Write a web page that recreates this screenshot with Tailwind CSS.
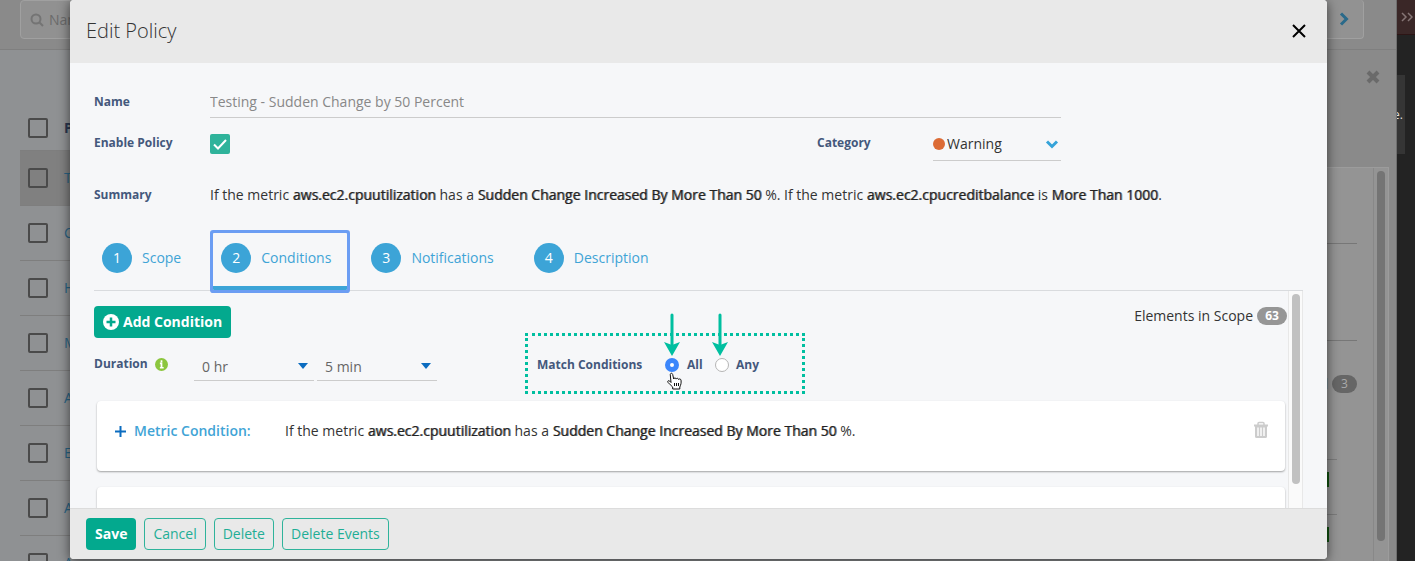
<!DOCTYPE html>
<html lang="en">
<head>
    <meta charset="utf-8"/>
    <meta name="viewport" content="width=device-width, initial-scale=1.0"/>
    <title>Edit Policy</title>
    <script src="https://cdn.jsdelivr.net/npm/@tailwindcss/browser@4"></script>
</head>
<body class="font-['Open_Sans',sans-serif] text-sm text-[#333]">
    <div class="relative h-screen overflow-hidden flex bg-[#232323]">

        <!-- Page behind the dialog -->
        <main class="flex-1 min-w-0 flex flex-col bg-[#8f9193] border-r border-[#6f6f6f]">
            <div class="h-[50px] shrink-0 flex justify-between items-start bg-[#8a8a8a] border-b border-[#7f7f7f] pl-5 pr-8">
                <label class="flex items-center gap-1 h-[39px] w-80 px-2 bg-[#919191] border border-[#a0a0a0] rounded-sm">
                    <svg class="w-4 h-4 text-[#747474] shrink-0" viewBox="0 0 16 16" fill="none" stroke="currentColor" stroke-width="2"><circle cx="7" cy="7" r="4.5"/><path d="M10.5 10.5L14 14"/></svg>
                    <input type="text" placeholder="Name" aria-label="Name" class="w-full outline-none placeholder:text-[#6b6b6b]"/>
                </label>
                <button aria-label="Next" class="h-[39px] w-10 bg-[#929292] border-r border-b border-[#a0a0a0] rounded-sm flex items-center justify-center">
                    <svg class="w-4 h-4 text-[#2a6a8a]" viewBox="0 0 16 16" fill="none" stroke="currentColor" stroke-width="3"><path d="M5 2.5l5.500 5.500L5 13.500"/></svg>
                </button>
            </div>
            <div class="flex-1 min-h-0 flex">
                <div class="flex-1 pl-5">
                    <table class="w-full mt-14 border-collapse">
                        <thead>
                            <tr class="h-[44px] border-b border-[#7e7e7e] text-left">
                                <th class="w-11 pl-2"><input type="checkbox" aria-label="Select all" class="block appearance-none w-5 h-5 border-2 border-[#4a4a4a] rounded-xs"/></th>
                                <th class="text-[#2b3750]">Policy</th>
                            </tr>
                        </thead>
                        <tbody class="text-[#2a6485]">
                            <tr class="h-[55px] border-b border-[#7e7e7e] bg-[#808080]"><td class="pl-2"><input type="checkbox" aria-label="T" class="block appearance-none w-5 h-5 border-2 border-[#4a4a4a] rounded-xs"/></td><td>T</td></tr>
                            <tr class="h-[55px] border-b border-[#7e7e7e]"><td class="pl-2"><input type="checkbox" aria-label="C" class="block appearance-none w-5 h-5 border-2 border-[#4a4a4a] rounded-xs"/></td><td>C</td></tr>
                            <tr class="h-[55px] border-b border-[#7e7e7e]"><td class="pl-2"><input type="checkbox" aria-label="H" class="block appearance-none w-5 h-5 border-2 border-[#4a4a4a] rounded-xs"/></td><td>H</td></tr>
                            <tr class="h-[55px] border-b border-[#7e7e7e]"><td class="pl-2"><input type="checkbox" aria-label="M" class="block appearance-none w-5 h-5 border-2 border-[#4a4a4a] rounded-xs"/></td><td>M</td></tr>
                            <tr class="h-[55px] border-b border-[#7e7e7e]"><td class="pl-2"><input type="checkbox" aria-label="A" class="block appearance-none w-5 h-5 border-2 border-[#4a4a4a] rounded-xs"/></td><td>A</td></tr>
                            <tr class="h-[55px] border-b border-[#7e7e7e]"><td class="pl-2"><input type="checkbox" aria-label="E" class="block appearance-none w-5 h-5 border-2 border-[#4a4a4a] rounded-xs"/></td><td>E</td></tr>
                            <tr class="h-[55px] border-b border-[#7e7e7e]"><td class="pl-2"><input type="checkbox" aria-label="A" class="block appearance-none w-5 h-5 border-2 border-[#4a4a4a] rounded-xs"/></td><td>A</td></tr>
                            <tr class="h-[55px]"><td class="pl-2"><input type="checkbox" aria-label="A" class="block appearance-none w-5 h-5 border-2 border-[#4a4a4a] rounded-xs"/></td><td>A</td></tr>
                        </tbody>
                    </table>
                </div>
                <aside class="w-[200px] flex flex-col bg-[#8a8a8a] pr-[7px]">
                    <div class="h-[117px] shrink-0 flex justify-end pt-[19px] pr-2">
                        <button aria-label="Close panel" class="w-4 h-4">
                            <svg class="w-4 h-4 text-[#6a6a6a]" viewBox="0 0 16 16" fill="none" stroke="currentColor" stroke-width="4"><path d="M3 3l10 10M13 3L3 13"/></svg>
                        </button>
                    </div>
                    <div class="flex-1 flex bg-[#949494] border-t border-r border-[#9c9c9c]">
                        <div class="flex-1 pr-4 flex flex-col">
                            <div class="h-[76px] shrink-0 border-b border-[#777]"></div>
                            <div class="h-[97px] shrink-0 border-b border-[#777]"></div>
                            <div class="h-[86px] shrink-0 flex items-center justify-end gap-1 text-[#222]">Total <span class="w-[25px] h-[18px] rounded-full bg-[#666] text-[#aaa] text-xs leading-[18px] text-center">3</span></div>
                            <div class="h-[33px] shrink-0 mr-5 border-b border-[#7c7c7c]"></div>
                            <div class="h-[55px] shrink-0 mr-5 pr-2 border-b border-[#7c7c7c] flex items-start justify-end pt-3"><span class="w-4 h-[15px] bg-[#10520f]"></span></div>
                            <div class="mr-5 pr-2 flex justify-end pt-3"><span class="w-4 h-[15px] bg-[#10520f]"></span></div>
                        </div>
                        <div class="w-[15px] border-l border-[#888] flex justify-center pt-[3px]"><div class="w-2 h-[370px] rounded-full bg-[#747474]"></div></div>
                    </div>
                </aside>
            </div>
        </main>
        <div class="w-[18px] flex flex-col overflow-hidden">
            <div class="h-[35px] flex items-center bg-[#3a2727] border-b border-[#2c1515] pl-1">
                <svg class="w-3 h-3 text-[#857575]" viewBox="0 0 12 12" fill="none" stroke="currentColor" stroke-width="1.500"><path d="M1 2l4 4-4 4M7 2l4 4-4 4"/></svg>
            </div>
            <div class="mt-10 w-2 h-[79px] bg-[#353535] flex items-center justify-end pr-[2px] text-xs text-[#ddd]"><span>e.</span></div>
        </div>

        <!-- Edit policy dialog -->
        <div role="dialog" aria-labelledby="dialogTitle" class="absolute top-0 bottom-[2px] left-[70px] right-[88px] flex flex-col rounded bg-[#f6f7f9] shadow-[0_2px_12px_rgba(0,0,0,0.6)] overflow-hidden">
            <header class="h-[63px] shrink-0 flex items-center justify-between bg-[#e9e9e9] pl-4 pr-5 pb-[2px]">
                <h1 id="dialogTitle" class="text-xl font-light">Edit Policy</h1>
                <button aria-label="Close" class="w-4 h-4">
                    <svg class="w-4 h-4 text-black" viewBox="0 0 16 16" fill="none" stroke="currentColor" stroke-width="2"><path d="M2 2l12 12M14 2L2 14"/></svg>
                </button>
            </header>

            <div class="flex-1 min-h-0 flex flex-col px-6 pt-[23px]">
                <div class="flex items-center pr-[242px]">
                    <label for="name" class="w-[116px] text-xs font-bold text-[#44587c]">Name</label>
                    <input id="name" type="text" value="Testing - Sudden Change by 50 Percent" class="flex-1 h-8 border-b border-[#ccc] text-[#888] outline-none"/>
                </div>
                <div class="flex items-start mt-[10px] pr-[242px]">
                    <label for="enable" class="w-[116px] pt-[7px] text-xs font-bold text-[#44587c]">Enable Policy</label>
                    <div class="grid pt-[6px]">
                        <input id="enable" type="checkbox" checked class="col-start-1 row-start-1 appearance-none w-5 h-5 rounded-xs bg-[#2fb39b]"/>
                        <svg class="col-start-1 row-start-1 w-5 h-5 text-white pointer-events-none" viewBox="0 0 20 20" fill="none" stroke="currentColor" stroke-width="2"><path d="M4 10.500l4 4L16 6"/></svg>
                    </div>
                    <label for="category" class="ml-auto w-[116px] pt-[7px] text-xs font-bold text-[#44587c]">Category</label>
                    <div class="w-32 h-[33px] flex items-center border-b border-[#ccc]">
                        <span class="w-3 h-3 rounded-full bg-[#dc6b35] shrink-0"></span>
                        <select id="category" class="flex-1 appearance-none outline-none pl-[2px]">
                            <option>Warning</option>
                        </select>
                        <svg class="w-4 h-4 mr-[1px] text-[#35a3d9] pointer-events-none" viewBox="0 0 16 16" fill="none" stroke="currentColor" stroke-width="3"><path d="M3 5.500l5 5 5-5"/></svg>
                    </div>
                </div>
                <div class="flex items-center mt-6">
                    <span class="w-[116px] text-xs font-bold text-[#44587c]">Summary</span>
                    <p class="text-[#333]">If the metric <span class="text-[#222] [text-shadow:1px_0_0_#2229]">aws.ec2.cpuutilization</span> has a <span class="text-[#222] [text-shadow:1px_0_0_#2229]">Sudden Change Increased By More Than 50</span> %. If the metric <span class="text-[#222] [text-shadow:1px_0_0_#2229]">aws.ec2.cpucreditbalance</span> is <span class="text-[#222] [text-shadow:1px_0_0_#2229]">More Than 1000</span>.</p>
                </div>

                <nav class="flex gap-4 h-[58px] shrink-0 mt-7 border-b border-[#d9dbde] text-[#3fa4d6]">
                    <button class="flex items-center gap-[10px] pl-2 pr-4 pb-2">
                        <span class="w-[30px] h-[30px] rounded-full bg-[#3ca4d7] text-white leading-[30px]">1</span>Scope
                    </button>
                    <button class="flex items-center gap-[10px] pl-2 pr-4 pb-1 border-b-4 border-[#3ca4d7] rounded-[1px] ring-3 ring-[#6b9df3]">
                        <span class="w-[30px] h-[30px] rounded-full bg-[#3ca4d7] text-white leading-[30px]">2</span>Conditions
                    </button>
                    <button class="flex items-center gap-[10px] pl-2 pr-4 pb-2">
                        <span class="w-[30px] h-[30px] rounded-full bg-[#3ca4d7] text-white leading-[30px]">3</span>Notifications
                    </button>
                    <button class="flex items-center gap-[10px] pl-2 pr-4 pb-2">
                        <span class="w-[30px] h-[30px] rounded-full bg-[#3ca4d7] text-white leading-[30px]">4</span>Description
                    </button>
                </nav>

                <div class="flex-1 min-h-0 flex overflow-hidden">
                    <div class="flex-1 min-w-0">
                        <div class="flex items-start h-[103px] pt-[15px]">
                            <div>
                                <button class="flex items-center gap-1 h-8 px-[9px] rounded bg-[#03a98e] text-white font-bold">
                                    <svg class="w-4 h-4" viewBox="0 0 16 16"><circle cx="8" cy="8" r="8" fill="#fff"/><path d="M8 3.500v9M3.500 8h9" stroke="#03a98e" stroke-width="2.500"/></svg>
                                    Add Condition
                                </button>
                                <div class="flex items-start mt-[14px] text-[#666]">
                                    <span class="flex items-center gap-2 w-[100px] pt-1 text-xs font-bold text-[#44587c]">Duration
                                        <svg class="w-[13px] h-[13px] -ml-[1px]" viewBox="0 0 12 12"><circle cx="6" cy="6" r="6" fill="#8cc63e"/><path d="M6 2v2M4.500 5H6v4M4.500 9h3.500" fill="none" stroke="#fff" stroke-width="1.600"/></svg>
                                    </span>
                                    <div class="w-[120px] flex items-center border-b border-[#ccc]">
                                        <select aria-label="Hours" class="flex-1 h-7 pt-[1px] pl-2 appearance-none outline-none"><option>0 hr</option></select>
                                        <svg class="w-[10px] h-[6px] mr-[6px]" viewBox="0 0 10 6"><path d="M0 0h10L5 6z" fill="#0b6cc0"/></svg>
                                    </div>
                                    <div class="w-[120px] ml-[3px] flex items-center border-b border-[#ccc]">
                                        <select aria-label="Minutes" class="flex-1 h-7 pt-[1px] pl-2 appearance-none outline-none"><option>5 min</option></select>
                                        <svg class="w-[10px] h-[6px] mr-[6px]" viewBox="0 0 10 6"><path d="M0 0h10L5 6z" fill="#0b6cc0"/></svg>
                                    </div>
                                </div>
                            </div>

                            <fieldset class="relative flex items-center w-[280px] h-[61px] mt-[27px] ml-[88px] pt-[2px] pl-[9px] border-3 border-dotted border-[#00bfa0] text-xs font-bold text-[#44587c]">
                                <span class="w-32">Match Conditions</span>
                                <label class="flex items-center gap-2 w-[50px]">
                                    <input type="radio" name="match" checked class="appearance-none w-[14px] h-[14px] rounded-full border-[#3b86fb] border-5 bg-white"/>All
                                </label>
                                <label class="flex items-center gap-[7px]">
                                    <input type="radio" name="match" class="appearance-none w-[14px] h-[14px] rounded-full border border-[#b5b5b5] bg-white"/>Any
                                </label>
                                <svg class="absolute left-[136px] -top-[23px] w-4 h-[43px]" viewBox="0 0 16 43"><path d="M8 2v32" stroke="#00bfa0" stroke-width="3" stroke-linecap="round"/><path d="M0 29l8 3 8-3-8 14z" fill="#00bfa0"/></svg>
                                <svg class="absolute left-[184px] -top-[23px] w-4 h-[43px]" viewBox="0 0 16 43"><path d="M8 2v32" stroke="#00bfa0" stroke-width="3" stroke-linecap="round"/><path d="M0 29l8 3 8-3-8 14z" fill="#00bfa0"/></svg>
                                <svg class="absolute left-[138px] top-9 w-[18px] h-[18px]" viewBox="0 0 18 18" fill="#fff" stroke="#111" stroke-linejoin="round"><path d="M5 10.500L4.300 3C4 1 6.300.6 6.700 2.500l1 4.500c.3-1.500 2.300-1.300 2.500.1.300-1.200 2.200-1 2.400.4.400-1 2.200-.7 2.400.6.400 3-.1 4.500-1.200 6.900v2H6.700v-2C5 13.500 3.500 12 2 10.400c-1-1.400.7-2.300 1.700-1.300z"/><path d="M8.500 11v3M10.500 11v3M12.500 11v3"/></svg>
                            </fieldset>

                            <div class="ml-auto flex items-center gap-1 text-[#333]">Elements in Scope
                                <span class="w-[30px] h-[18px] mr-[1px] rounded-full bg-[#969696] text-white text-xs font-bold leading-[18px] text-center">63</span>
                            </div>
                        </div>

                        <div class="flex flex-col gap-4 mt-[7px] px-[3px]">
                            <section class="flex items-start h-[70px] pt-5 pl-[18px] pr-4 rounded bg-white shadow-[0_1px_2px_rgba(0,0,0,0.35)]">
                                <button class="flex items-center gap-2 w-[170px] font-semibold text-[#3fa4d6]">
                                    <svg class="w-[11px] h-[11px]" viewBox="0 0 11 11"><path d="M5.500 0v11M0 5.500h11" stroke="#0b6cc0" stroke-width="2"/></svg>
                                    Metric Condition:
                                </button>
                                <p>If the metric <span class="text-[#222] [text-shadow:1px_0_0_#2229]">aws.ec2.cpuutilization</span> has a <span class="text-[#222] [text-shadow:1px_0_0_#2229]">Sudden Change Increased By More Than 50</span> %.</p>
                                <button aria-label="Delete condition" class="ml-auto">
                                    <svg class="w-4 h-[18px]" viewBox="0 0 16 18"><path d="M5 4V2.500Q5 1.500 6 1.500h4q1 0 1 1V4" fill="none" stroke="#ccc" stroke-width="1.500"/><path d="M1 3.500h14v2H1zM2 5h12v10.500q0 1.500-1.500 1.500h-9q-1.500 0-1.500-1.500z" fill="#ccc"/><path d="M5 6.500v8.500M8 6.500v8.500M11 6.500v8.500" stroke="#fff" stroke-width="1.400"/></svg>
                                </button>
                            </section>
                            <section class="h-[70px] rounded bg-white shadow-[0_1px_2px_rgba(0,0,0,0.35)]"></section>
                        </div>
                    </div>
                    <div class="w-[15px] shrink-0 flex justify-center pt-[3px] bg-[#fafafa] border-x border-[#e8e8e8]">
                        <div class="w-2 h-[190px] rounded-full bg-[#c1c1c1]"></div>
                    </div>
                </div>
            </div>

            <footer class="h-[51px] shrink-0 flex items-center gap-2 px-4 bg-[#e9e9e9] border-t border-[#dcdcdc]">
                <button class="h-8 px-[9px] rounded bg-[#03a98e] text-white font-bold">Save</button>
                <button class="h-8 px-2 rounded border border-[#2fb39b] text-[#1fae96]">Cancel</button>
                <button class="h-8 px-2 rounded border border-[#2fb39b] text-[#1fae96]">Delete</button>
                <button class="h-8 px-2 rounded border border-[#2fb39b] text-[#1fae96]">Delete Events</button>
            </footer>
        </div>
    </div>
</body>
</html>
